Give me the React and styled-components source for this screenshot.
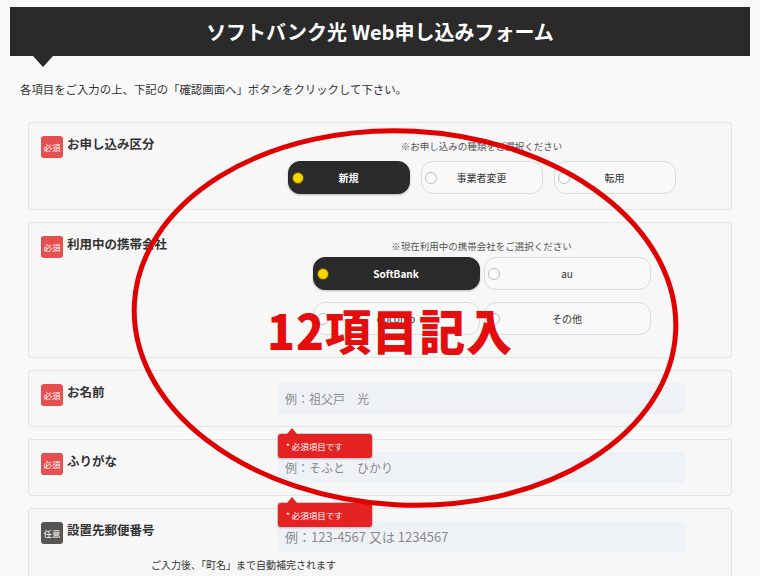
import React from "react";
import styled, { createGlobalStyle } from "styled-components";

const GlobalStyle = createGlobalStyle`
  html, body {
    margin: 0;
    padding: 0;
    background: #f8f8f8;
  }
  body {
    font-family: "Noto Sans CJK JP", "Noto Sans", sans-serif;
    color: #333;
  }
`;

const Page = styled.div`
  position: relative;
  width: 760px;
  height: 576px;
  overflow: hidden;
  padding: 7px 10px 0;
  box-sizing: border-box;
`;

const Header = styled.h1`
  position: relative;
  margin: 0;
  height: 49px;
  background: #2a2a2a;
  color: #fff;
  font-size: 20px;
  font-weight: 700;
  display: flex;
  align-items: center;
  justify-content: center;
  &::after {
    content: "";
    position: absolute;
    left: 23px;
    top: 100%;
    border-left: 10px solid transparent;
    border-right: 10px solid transparent;
    border-top: 11px solid #2a2a2a;
  }
`;

const Intro = styled.p`
  margin: 25px 0 0 10px;
  font-size: 11.4px;
  line-height: 16px;
  color: #333;
`;

const Cards = styled.div`
  display: flex;
  flex-direction: column;
  gap: 12px;
  margin: 25px 18px 0;
`;

const Card = styled.section`
  display: grid;
  grid-template-columns: 237px 407px;
  padding: 12px 48px 12px 12px;
  border: 1px solid #e4e4e4;
  border-radius: 3px;
  background: #f7f7f7;
`;

const Label = styled.div`
  display: flex;
  align-items: flex-start;
  gap: 4px;
`;

const Badge = styled.span`
  width: 22px;
  height: 22px;
  border-radius: 3px;
  background: ${(p) => (p.$optional ? "#555" : "#e44f4f")};
  color: #fff;
  font-size: 8.5px;
  display: flex;
  align-items: center;
  justify-content: center;
  margin-top: 1px;
  flex-shrink: 0;
`;

const Title = styled.span`
  font-size: 12.5px;
  font-weight: 700;
  line-height: 18px;
  color: #333;
`;

const Field = styled.div`
  position: relative;
  display: flex;
  flex-direction: column;
  align-items: center;
`;

const Hint = styled.div`
  margin-top: 4px;
  font-size: 9.5px;
  line-height: 14px;
  color: #555;
`;

const Choices = styled.div`
  display: grid;
  grid-template-columns: repeat(${(p) => p.$cols}, ${(p) => p.$w}px);
  column-gap: ${(p) => p.$gap}px;
  row-gap: 12px;
  margin-top: ${(p) => p.$top}px;
  padding-bottom: ${(p) => p.$bottom || 0}px;
`;

const Choice = styled.div`
  position: relative;
  height: 33px;
  box-sizing: border-box;
  border-radius: 12px;
  border: 1px solid ${(p) => (p.$on ? "#2a2a2a" : "#dcdcdc")};
  background: ${(p) => (p.$on ? "#2a2a2a" : "#f9f9f9")};
  color: ${(p) => (p.$on ? "#fff" : "#333")};
  font-size: 10px;
  font-weight: ${(p) => (p.$on ? 700 : 400)};
  display: flex;
  align-items: center;
  justify-content: center;
  box-shadow: ${(p) => (p.$on ? "0 1px 2px rgba(0,0,0,0.25)" : "none")};
`;

const Dot = styled.span`
  position: absolute;
  left: 3px;
  top: 50%;
  width: 12px;
  height: 12px;
  margin-top: -6px;
  box-sizing: border-box;
  border-radius: 50%;
  border: 1px solid ${(p) => (p.$on ? "#5a5000" : "#bbb")};
  background: ${(p) => (p.$on ? "#f4d800" : "#fff")};
`;

const Input = styled.div`
  width: 100%;
  height: 31px;
  box-sizing: border-box;
  padding: 0 7px;
  background: #eef2f7;
  border-radius: 2px;
  color: #8a8a8a;
  font-size: ${(p) => p.$size || 12}px;
  display: flex;
  align-items: center;
`;

const Tip = styled.div`
  position: absolute;
  left: 0;
  top: 51px;
  width: 94px;
  height: 24px;
  box-sizing: border-box;
  padding-left: 8px;
  background: #e52222;
  border-radius: 3px;
  box-shadow: 0 0 0 1px #c9c9c9, 0 1px 2px rgba(0, 0, 0, 0.3);
  color: #fff;
  font-size: 8.5px;
  display: flex;
  align-items: center;
  z-index: 2;
  &::before {
    content: "";
    position: absolute;
    left: 9px;
    bottom: 100%;
    border-left: 5px solid transparent;
    border-right: 5px solid transparent;
    border-bottom: 6px solid #e52222;
  }
`;

const Note = styled.div`
  grid-column: 1 / -1;
  margin-top: 6px;
  padding-left: 110px;
  font-size: 10px;
  line-height: 14px;
  color: #333;
`;

const Overlay = styled.svg`
  position: absolute;
  left: 0;
  top: 0;
  pointer-events: none;
  z-index: 5;
`;

const Stamp = styled.div`
  position: absolute;
  left: 267px;
  top: 305px;
  font-size: 46px;
  line-height: 46px;
  font-weight: 900;
  letter-spacing: 1px;
  color: #e40e0e;
  transform: scaleY(1.05);
  transform-origin: left top;
  z-index: 6;
`;

const FieldCard = ({ label, optional, children }) => (
  <Card>
    <Label>
      <Badge $optional={optional}>{optional ? "任意" : "必須"}</Badge>
      <Title>{label}</Title>
    </Label>
    {children}
  </Card>
);

const RadioChoice = ({ on, children }) => (
  <Choice $on={on}>
    <Dot $on={on} />
    {children}
  </Choice>
);

export default function App() {
  return (
    <>
      <GlobalStyle />
      <Page>
        <Header>ソフトバンク光 Web申し込みフォーム</Header>
        <Intro>各項目をご入力の上、下記の「確認画面へ」ボタンをクリックして下さい。</Intro>
        <Cards>
          <FieldCard label="お申し込み区分">
            <Field>
              <Hint>※お申し込みの種類をご選択ください</Hint>
              <Choices $cols={3} $w={122} $gap={11} $top={8} $bottom={3}>
                <RadioChoice on>新規</RadioChoice>
                <RadioChoice>事業者変更</RadioChoice>
                <RadioChoice>転用</RadioChoice>
              </Choices>
            </Field>
          </FieldCard>

          <FieldCard label="利用中の携帯会社">
            <Field>
              <Hint>※現在利用中の携帯会社をご選択ください</Hint>
              <Choices $cols={2} $w={167} $gap={4} $top={4} $bottom={10}>
                <RadioChoice on>SoftBank</RadioChoice>
                <RadioChoice>au</RadioChoice>
                <RadioChoice>docomo</RadioChoice>
                <RadioChoice>その他</RadioChoice>
              </Choices>
            </Field>
          </FieldCard>

          <FieldCard label="お名前">
            <Field>
              <Input>例：祖父戸　光</Input>
              <Tip>* 必須項目です</Tip>
            </Field>
          </FieldCard>

          <FieldCard label="ふりがな">
            <Field>
              <Input>例：そふと　ひかり</Input>
              <Tip>* 必須項目です</Tip>
            </Field>
          </FieldCard>

          <FieldCard label="設置先郵便番号" optional>
            <Field>
              <Input $size={13}>例：123-4567 又は 1234567</Input>
            </Field>
            <Note>ご入力後、「町名」まで自動補完されます</Note>
          </FieldCard>
        </Cards>

        <Overlay width="760" height="576" viewBox="0 0 760 576">
          <ellipse
            cx="405"
            cy="318"
            rx="271"
            ry="187"
            transform="rotate(3 405 318)"
            fill="none"
            stroke="#e00000"
            strokeWidth="5"
          />
        </Overlay>
        <Stamp>12項目記入</Stamp>
      </Page>
    </>
  );
}
